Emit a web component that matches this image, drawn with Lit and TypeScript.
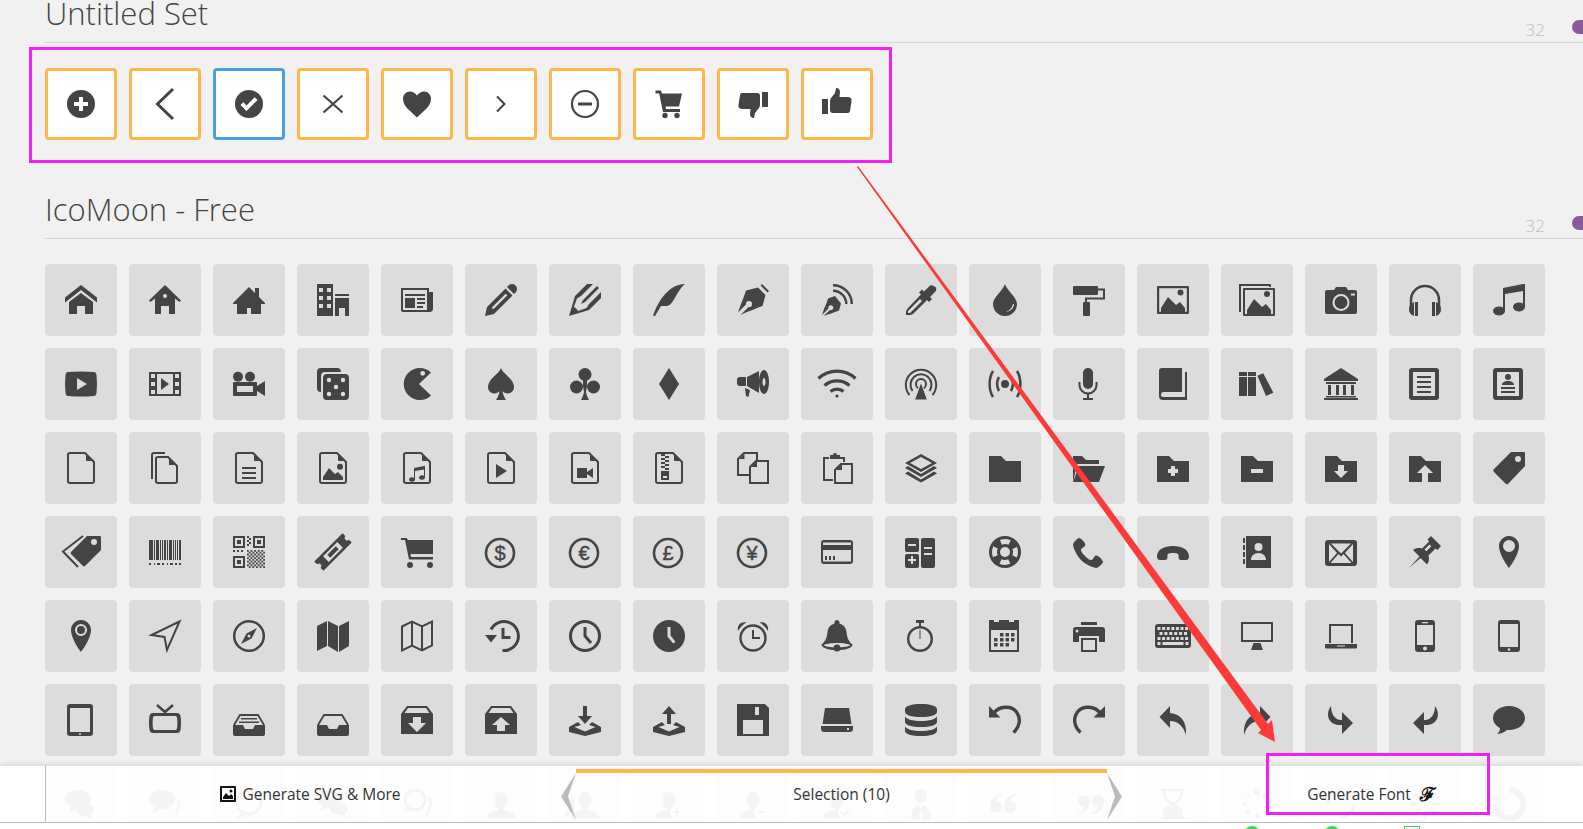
import { LitElement, html, css } from "lit";
import { customElement } from "lit/decorators.js";
import { unsafeSVG } from "lit/directives/unsafe-svg.js";

const INK = "#444";
const TILE = "#dcdcdc";
const P = (d: string) => `<path d="${d}"/>`;
const S = (d: string, w = 2, c = INK) => `<path d="${d}" fill="none" stroke="${c}" stroke-width="${w}"/>`;
const O = (x: number, y: number, r: number) => `<circle cx="${x}" cy="${y}" r="${r}"/>`;
const R = (x: number, y: number, r: number, w = 2) => `<circle cx="${x}" cy="${y}" r="${r}" fill="none" stroke="${INK}" stroke-width="${w}"/>`;
const c = (x: number, y: number, r: number) => `M${x - r} ${y}a${r} ${r} 0 1 0 ${2 * r} 0a${r} ${r} 0 1 0 ${-2 * r} 0z`;
const rr = (x: number, y: number, w: number, h: number, r: number) =>
  `M${x + r} ${y}h${w - 2 * r}a${r} ${r} 0 0 1 ${r} ${r}v${h - 2 * r}a${r} ${r} 0 0 1 ${-r} ${r}h${-(w - 2 * r)}a${r} ${r} 0 0 1 ${-r} ${-r}v${-(h - 2 * r)}a${r} ${r} 0 0 1 ${r} ${-r}z`;
const rect = (x: number, y: number, w: number, h: number) => `M${x} ${y}h${w}v${h}h${-w}z`;
const M = (f: string) => `<g transform="translate(32 0) scale(-1 1)">${f}</g>`;
const G = (t: string, f: string) => `<g transform="${t}">${f}</g>`;
const coin = (s: string) =>
  R(15, 17, 14, 2.6) + `<text x="15" y="24" font-size="20" text-anchor="middle" stroke="${INK}" stroke-width=".4" font-family="Liberation Sans, sans-serif">${s}</text>`;

const fileBase = S("M5 1h15l9 9v19a2 2 0 0 1-2 2H5a2 2 0 0 1-2-2V3a2 2 0 0 1 2-2z", 2) + P("M21 2.500l6.500 6.500h-6.500z");
const musicPath = "M30 0h2v23a6 4.500 0 1 1-2-3.400V7L12 10v17a6 4.500 0 1 1-2-3.400V4z";
const folderD = "M0 4h12l5 5h15v21H0z";
const frame30 = rr(0, 0, 30, 32, 3) + rect(4, 4, 22, 24);
const mountains = "M4 28v-4l7-11 8 8 4-3 5 6v4z";

const range = (n: number) => Array.from({ length: n }, (_, i) => i);
const qrChecker = range(10).flatMap((i) => range(10).filter((j) => (i + j) % 2 === 0).map((j) => rect(14 + i * 1.8, 14 + j * 1.8, 1.8, 1.8))).join("");
const barSpec = [[0, 4], [5, 1], [7, 3], [11, 1], [13, 1], [15, 2], [18, 1], [20, 3], [24, 1], [26, 1], [28, 1], [30, 2]];
const barcodeD = barSpec.map(([x, w]) => rect(x, 4, w, 20)).join("") + [[0, 2], [5, 1], [8, 3], [13, 2], [18, 1], [21, 3], [26, 2], [30, 2]].map(([x, w]) => rect(x, 27, w, 2)).join("");
const keysD =
  range(7).map((i) => rect(0.5 + i * 4.6, 7, 3, 3)).join("") +
  range(6).map((i) => rect(2.5 + i * 4.9, 12, 3, 3)).join("") +
  range(7).map((i) => rect(0.5 + i * 4.6, 17, 3, 3)).join("") +
  rect(0.5, 22, 3, 3) + rect(5.5, 22, 21, 3) + rect(28.5, 22, 3, 3);
const calD = [[11, 13], [16.5, 13], [22, 13], [5, 18], [11, 18], [16.5, 18], [22, 18], [5, 23], [11, 23], [16.5, 23]].map(([x, y]) => rect(x, y, 3.5, 3.5)).join("");
const undoArc = S("M5 9C10 2 22 1 27.500 8c5 7 3 15-3 20.500", 3.4) + P("M0 2v11.500h11.500z");
const undo2 = P("M13 2L2.500 13 13 24v-7c7 0 13 4 16 14 1-13-5-21-16-22z");
const forward = P("M6 2C0 10 3 22 17 21v9l11-11L17 8v8C10 16.500 6 10 6 2z");
const bubbleD = "M16 2c8.800 0 16 5 16 12s-7 12-16 12h-2c-3 2.500-7 4-10 4 2-1.500 3-3.500 3-6C3 22 0 18 0 14 0 7 7 2 16 2z";
const userD = "M18 22.100v-1.650c2.200-1.240 4-4.340 4-7.450 0-4.970 0-9-6-9s-6 4.030-6 9c0 3.100 1.800 6.200 4 7.450v1.650C7.200 22.660 2 26 2 30h28c0-4-5.200-7.340-12-7.900z";
const quote = "M7 13c3.500 0 6 2.700 6 6s-2.700 6-6 6-6-2.700-6-6.500C1 12 6 6 13 6v2c-3 0-5 1.500-6 5z";
const trayD = "M0 23l9-5 3 3-6.500 2 10.500 4.500 10.500-4.500-6.500-2 3-3 9 5v5L16 32 0 28z";

const topIcons = [
  P(c(16, 16, 14) + "M14 9h4v5h5v4h-5v5h-4v-5H9v-4h5z"),
  S("M24 1L8.500 16 24 31", 3),
  P(c(16, 16, 14) + "M13.500 23l-6-6 2.800-2.800 3.200 3.200 8.200-8.200 2.800 2.800z"),
  S("M6.500 7.500l19 17M25.500 7.500l-19 17", 2.2),
  P("M23 3.500c-3 0-5.500 1.700-7 4-1.500-2.300-4-4-7-4C5 3.500 2 6.800 2 11c0 8 9 13 14 18.500 5-5.500 14-10.500 14-18.500 0-4.200-3-7.500-7-7.500z"),
  S("M12 8.500l7.500 7.500-7.500 7.500", 2),
  R(16, 16, 13, 2.2) + P("M9 14.500h14v3H9z"),
  P("M2.500 2.500H8l1 3h20l-3 13H12.500l.6 2.500H27v3H10L6.200 5.500H2.500z") + O(12, 27.5, 2.7) + O(24, 27.5, 2.7),
  P("M25 4h6v15h-6z") + P("M5 5h15c2 0 3 1 3 3v9c0 1-.5 2-1 3l-4 5-1 5c-2.500 0-4-1.500-4-4l.5-5H6c-3 0-5-1-4.500-4L3 7c.2-1.200 1-2 2-2z"),
  G("rotate(180 16 15)", P("M25 4h6v15h-6z") + P("M5 5h15c2 0 3 1 3 3v9c0 1-.5 2-1 3l-4 5-1 5c-2.500 0-4-1.500-4-4l.5-5H6c-3 0-5-1-4.500-4L3 7c.2-1.200 1-2 2-2z")),
];

const gridIcons = [
  // row 1
  P("M32 18.451l-16-12.420-16 12.420v-5.064l16-12.420 16 12.420zM28 18v12h-8v-8h-8v8h-8v-12l12-9z"),
  P("M16 1L0 16.500l1.500 1.500L6 14.500V30h6v-8h8v8h6V14.500l4.500 3.500 1.500-1.500z" + c(16, 12, 2)),
  P("M32 19l-6-6V4h-4v5l-6-6L0 19v1h4v10h10v-6h4v6h10V20h4z"),
  P("M0 32h16V0H0zM10 4h4v4h-4zM10 12h4v4h-4zM10 20h4v4h-4zM2 4h4v4H2zM2 12h4v4H2zM2 20h4v4H2z") + P("M18 10h14v2H18zM18 32h4v-8h6v8h4V14H18z"),
  P("M28 8V4H0v22c0 1.105.895 2 2 2h27c1.657 0 3-1.343 3-3V8h-4zM26 26H2V6h24zM4 10h20v2H4zM16 14h8v2h-8zM16 18h8v2h-8zM16 22h6v2h-6zM4 14h10v10H4z"),
  P("M27 0c2.761 0 5 2.239 5 5 0 1.126-.372 2.164-1 3l-2 2-7-7 2-2c.836-.628 1.874-1 3-1zM2 23l-2 9 9-2 18.500-18.500-7-7zM22.362 11.362l-14 14-1.724-1.724 14-14z"),
  P("M12 20l4-2 14-14-2-2-14 14-2 4zM9.041 27.097c-.989-2.085-2.052-3.149-4.137-4.137l3.097-8.525 4-2.435 12-12h-6l-12 12-6 20 20-6 12-12v-6l-12 12-2.435 4z"),
  P("M0 32c4-12 14.469-32 32-32-8.219 6.594-12 22-18 22H8l-6 10z"),
  P("M25 0l7 7-1.500 1.500-7-7z") + P("M21 3.500L9 6.500C7 13 3 22 1 28.500L9 20.500a3 3 0 1 1 2.500 2.500L3.500 31C10 28 20 24 25.500 22l3-11z"),
  S("M12 1.200A18.800 18.800 0 0 1 30.800 20", 2.4) + S("M12 6.700A13.300 13.300 0 0 1 25.300 20", 2.4) + P("M14 12L7 14.500C6 19 3 24 1 31l6.500-6.500a2.500 2.500 0 1 1 1.500 1.500L2.500 32C7 30.500 13 28.500 18 26.500l2-7z"),
  P("M29 2.500a3.500 3.500 0 0 0-5 0l-5 5-2-2-3 3 2 2L3 24c-1 1-2 3-2 4v3h4c1 0 3-1 4-2l13-13 2 2 3-3-2-2 5-5a3.500 3.500 0 0 0 0-5.500zM5 29H3v-2L15 15l2 2z"),
  P("M16 0C14 7 4 13 4 20a12 12 0 0 0 24 0C28 13 18 7 16 0zM25 20c0 4-3.500 7.500-8 8 3.500-1.500 6-4 7-8z"),
  P(rr(0, 2, 25, 9, 1)) + S("M25 5.500h6v9H13v4", 2) + P(rr(10, 18, 7, 14, 1)),
  P(rr(0, 2, 32, 28, 1) + rect(2.2, 4.2, 27.6, 23.6)) + P(mountains) + O(23.5, 8.5, 3),
  S("M-1 28V1h30v2", 2) + P(rr(2, 4, 32, 28, 1) + rect(4, 6, 28, 24)) + G("translate(2 2)", P(mountains)) + O(26, 10, 3),
  P("M0 8a2 2 0 0 1 2-2h7l2-3h10l2 3h7a2 2 0 0 1 2 2v20a2 2 0 0 1-2 2H2a2 2 0 0 1-2-2z" + c(16, 18.5, 8.5) + c(16, 18.5, 6.5) + rect(26, 9.5, 4, 2)),
  S("M2 24V16a14 14 0 0 1 28 0v8", 2.5) + P("M6 18h3v14H6zM23 18h3v14h-3z") + P("M3.500 19l1.500-1v14C2 31 0 28.500 0 25.500S1.500 20 3.500 19z") + M(P("M3.500 19l1.500-1v14C2 31 0 28.500 0 25.500S1.500 20 3.500 19z")),
  P(musicPath),
  // row 2
  P("M3 4Q16 3 29 4q2 0 2.500 3 1 9 0 18-.5 3-2.500 3-13 1-26 0-2 0-2.500-3-1-9 0-18Q1 4 3 4zM12 10v12l10-6z"),
  P("M0 4h32v24H0zM2 6h4v4H2zM2 14h4v4H2zM2 22h4v4H2zM26 6h4v4h-4zM26 14h4v4h-4zM26 22h4v4h-4zM8 6h16v20H8z") + P("M12 10l8 6-8 6z"),
  O(5, 8.7, 5) + O(17, 8.7, 5) + P("M1 14h22a1 1 0 0 1 1 1v12a1 1 0 0 1-1 1H1a1 1 0 0 1-1-1V15a1 1 0 0 1 1-1zM4 18v6h16v-6z") + P("M24 18l8-5v15l-8-5z"),
  P("M4 0h16a4 4 0 0 1 4 4H8a4 4 0 0 0-4 4v16a4 4 0 0 1-4-4V4a4 4 0 0 1 4-4z") + P(rr(6, 6, 26, 26, 4) + c(12, 12, 2.2) + c(26, 12, 2.2) + c(19, 19, 2.2) + c(12, 26, 2.2) + c(26, 26, 2.2)),
  P("M30 4.600A16 16 0 1 0 30 27.400L18 16z" + c(21.7, 5.3, 2.4)),
  P("M16 0C14 6 3 11 3 19c0 4 3 6.500 6.500 6.500 2 0 4-1 5-2.500-.3 3-1.500 6-3.500 9h10c-2-3-3.200-6-3.500-9 1 1.500 3 2.500 5 2.500 3.500 0 6.500-2.500 6.500-6.500C29 11 18 6 16 0z"),
  O(16, 6.5, 6.5) + O(7.5, 19, 6.5) + O(24.5, 19, 6.5) + P("M14 10h4v8l-1 6c.5 3 1.500 5 3 8h-8c1.500-3 2.500-5 3-8l-1-6z"),
  P("M16 0L26 16 16 32 6 16z"),
  P("M3 9h6v9H3a3 3 0 0 1-3-3v-3a3 3 0 0 1 3-3z") + P("M10 9L22 3v22L10 18z") + P("M8 20l5 2-1.500 7-2.500-1z") + P("M27 2c2.800 0 5 5.400 5 12s-2.200 12-5 12-5-5.400-5-12 2.200-12 5-12zM27 10c-.8 0-1.500 1.800-1.500 4s.7 4 1.500 4 1.500-1.800 1.500-4-.7-4-1.500-4z"),
  S("M-2.500 10.500A27 27 0 0 1 34.500 10.500", 3.2) + S("M3.500 17.500A19 19 0 0 1 28.500 17.500", 3.2) + S("M9.500 23.500A10 10 0 0 1 22.500 23.500", 3.2) + O(16, 28, 1.6),
  S("M4.500 27A15.200 15.200 0 1 1 27.500 27", 2) + S("M7.500 23A10.500 10.500 0 1 1 24.500 23", 2) + R(16, 16, 5, 2) + `<path d="M16 14L22.500 32h-13z" stroke="${TILE}" stroke-width="1"/>`,
  S("M4 3C-.5 10-.5 22 4 29", 2.5) + S("M10 9C7.500 13 7.500 19 10 23", 2.5) + M(S("M4 3C-.5 10-.5 22 4 29", 2.5) + S("M10 9C7.500 13 7.500 19 10 23", 2.5)) + O(16, 16, 4),
  P(rr(10, 0, 10, 21, 5)) + S("M6.500 14v3a8.500 8.500 0 0 0 17 0v-3", 2) + P("M14 25h2v5h-2zM10 30h10v2H10z"),
  P("M5 0h20v24H6.500a2.500 2.500 0 0 0 0 5H28V4h2v28H6a4 4 0 0 1-4-4V3a3 3 0 0 1 3-3z"),
  P("M-2 4h8v24h-8zM-2 8h8v1h-8z") + P("M7 4h8v24H7zM7 8h8v1H7z") + P("M16.400 7.700l5.800-2.400L32.400 24.700 25 28z"),
  P("M16 0L33 11v2H-1v-2z") + P("M1 14h30v2H1zM3 17h3v10H3zM11 17h3v10h-3zM18 17h3v10h-3zM26 17h3v10h-3zM1 28h30v1.500H1zM-1 30h34v2H-1z"),
  P(frame30 + "M8 8h14v2H8zM8 13h14v2H8zM8 18h14v2H8zM8 23h14v2H8z"),
  P(frame30 + c(15, 9, 3) + "M9 17c0-3 3-4 6-4s6 1 6 4zM8 19h14v2H8zM8 23h14v2H8z"),
  // row 3
  fileBase,
  S("M3 27V3a2 2 0 0 1 2-2h11", 2) + S("M9 5h10l9 9v15a2 2 0 0 1-2 2H9a2 2 0 0 1-2-2V7a2 2 0 0 1 2-2z", 2) + P("M20 6.500l6.500 6.500H20z"),
  fileBase + P("M9 15h14v2H9zM9 20h14v2H9zM9 25h14v2H9z"),
  fileBase + P("M6 28v-3l6-9 6 6 3-2 5 5v3z") + O(23, 14.7, 3),
  fileBase + G("translate(8 14) scale(.5)", P(musicPath)),
  fileBase + P("M11 12l11 7-11 7z"),
  fileBase + P("M8 16h10v10H8zM18 20l6-4v10l-6-4z"),
  fileBase + P(rect(8, 2, 4, 2) + rect(12, 4, 4, 2) + rect(8, 6, 4, 2) + rect(12, 8, 4, 2) + rect(8, 10, 4, 2) + rect(12, 12, 4, 2) + rect(8, 14, 4, 2) + rect(12, 16, 4, 2) + rect(8, 19, 8, 9) + rect(10, 24, 4, 2)),
  S("M12 23H1V7l6-6h13v7", 2) + P("M2.500 7h5V2z") + S("M19 9h12v22H13V15z", 2) + P("M14 15h6V9z"),
  S("M8 6H3v22h9", 2) + S("M18 6h5v4", 2) + P("M9 3h3a2 2 0 0 1 4 0h3v4H9z") + S("M20 12h11v19H14V18z", 2) + P("M15 18h6v-6z"),
  P("M16 2L32 11 16 20 0 11zM16 5L5 11l11 6 11-6z") + P("M0 16l3-2 13 8 13-8 3 2-16 9z") + P("M0 21.500l3-2 13 8 13-8 3 2-16 9z"),
  P(folderD),
  P("M26 30l6-16H6L0 30z") + P("M4 12L0 30V4h9l4 4h13v4z"),
  P(folderD + "M14 14h4v3h3v4h-3v3h-4v-3h-3v-4h3z"),
  P(folderD + "M10 17h12v4H10z"),
  P(folderD + "M13 13h6v6h4l-7 7-7-7h4z"),
  P(folderD + "M16 13l8 8h-5v9h-6v-9H8z"),
  P("M31 0H18L1 17a2 2 0 0 0 0 3l11.500 11.500a2 2 0 0 0 3 0L32 14V1a1 1 0 0 0-1-1z" + c(25, 7, 3)),
  // row 4
  P("M35 0H22L6 16a1.500 1.500 0 0 0 0 2l12 12a1.500 1.500 0 0 0 2 0L36 14V1a1 1 0 0 0-1-1z" + c(29, 6, 3)) + S("M18 0L-2 15.500 13 31", 2),
  P(barcodeD),
  P(rect(0, 0, 12, 12) + rect(2, 2, 8, 8) + rect(4, 4, 4, 4) + rect(20, 0, 12, 12) + rect(22, 2, 8, 8) + rect(24, 4, 4, 4) + rect(0, 20, 12, 12) + rect(2, 22, 8, 8) + rect(4, 24, 4, 4)) + P(qrChecker + rect(14, 0, 2, 2) + rect(16, 2, 2, 2) + rect(14, 4, 2, 2) + rect(16, 6, 2, 2) + rect(14, 8, 2, 2) + rect(0, 14, 2, 2) + rect(4, 14, 2, 2) + rect(8, 14, 2, 2)),
  G("rotate(-45 16 16)", P("M-4 9.500H36v4a2.500 2.500 0 0 0 0 5v4H-4v-4a2.500 2.500 0 0 0 0-5zM6 12h20v8H6zM10 14h12v4H10z")),
  P("M0 2h5.500L7 4h25v14H9.500l.5 3h22v2.500H8L4 4H0z") + O(9, 29, 3) + O(29, 29, 3),
  coin("$"),
  coin("€"),
  coin("£"),
  coin("¥"),
  P(rr(0, 4, 32, 24, 3) + rect(2, 6.5, 28, 2.5) + rect(2, 14, 28, 11.5) + "M4 20h2v4H4zM8 20h2v4H8zM12 20h2v4h-2z"),
  P(rr(0, 2, 14, 14, 2) + rect(3, 8, 8, 2)) + P(rr(0, 18, 14, 14, 2) + "M6 20h2v3h3v2H8v3H6v-3H3v-2h3z") + P(rr(16, 2, 14, 30, 2) + rect(19, 11, 8, 2) + rect(19, 17, 8, 2)),
  O(16, 16, 16) + `<circle cx="16" cy="16" r="10.500" fill="none" stroke="${TILE}" stroke-width="5" stroke-dasharray="9 7.490" stroke-dashoffset="4.500"/>` + `<circle cx="16" cy="16" r="5" fill="${TILE}"/>`,
  P("M22 20c-2 2-2 4-4 4s-4-2-6-4-4-4-4-6 2-2 4-4-4-8-6-8-6 6-6 6c0 4 4.109 12.109 8 16s12 8 16 8c0 0 6-4 6-6s-6-8-8-6z"),
  P("M0 20.500c0-7 7-10.500 16-10.500s16 3.500 16 10.500c0 2-1 3.500-3 3.500h-5c-2 0-2.500-1.500-2.500-3 0-1 .5-2-.5-3-1-.7-2.500-1-5-1s-4 .3-5 1c-1 1-.5 2-.5 3 0 1.500-.5 3-2.500 3H3c-2 0-3-1.500-3-3.500z"),
  P("M5 0h25v32H5z" + c(17.5, 11, 4) + "M10 24c0-4 3-7 7.500-7s7.500 3 7.500 7z") + P("M2 2h2v5H2zM2 9h2v5H2zM2 16h2v5H2zM2 23h2v5H2z"),
  P(rr(0, 4, 32, 26, 3) + "M4 8v18l8-9zM6 7.500l10 10 10-10zM28 8l-8 9 8 9zM5.500 27h21l-8-9-2.500 2.500-2.500-2.500z"),
  P("M22 0l-3.500 3.500 1.500 2-7 7c-3-1-6.500-.5-9 1.500l6.500 6.500L0 32l11.500-10 6.500 6.500c2-2.500 2.500-6 1.500-9l7-7 2 1.500L32 10zM15.500 13.500l5-5 1.800 1.800-5 5z"),
  P("M16 0C10.500 0 6 4.500 6 10c0 9 10 22 10 22s10-13 10-22C26 4.500 21.500 0 16 0z" + c(16, 10, 6)),
  // row 5
  P("M16 0C10.500 0 6 4.500 6 10c0 9 10 22 10 22s10-13 10-22C26 4.500 21.500 0 16 0z" + c(16, 10, 6) + c(16, 10, 4)),
  S("M30.500 1.500L2.500 15l13 2 2.500 13z", 2),
  R(16, 16, 14.8, 2.5) + P("M24 8L13.500 13.500 8 24l10.500-5.500z" + c(16, 16, 1.5)),
  P("M0 6l10-5v25L0 31zM11 1l10 5v26l-10-6zM22 6l10-5v25l-10 6z"),
  S("M1 6.500l10-5 10 5 10-5v24l-10 5-10-5-10 5zM11 1.500v24M21 6.500v24", 2),
  S("M6 9.500A14.500 14.500 0 1 1 17.500 30.500", 3) + P("M0 15h12l-6 7.500z") + P("M16.500 8h3v8h6v3h-9z"),
  R(16, 16, 14.5, 3) + S("M16 7v9l6 7", 3),
  P(c(16, 16, 16) + "M14.500 7h3v8.400l5 6.300-2.300 1.900-5.700-7.100z"),
  R(16, 18, 12.5, 2.4) + S("M16 10v8h7", 2) + P("M1 11C0 5 4 1.500 9.500 2.500 6 4.500 3.500 7 1 11z") + P("M31 11c1-6-3-9.500-8.500-8.500 3.500 2 6 4.500 8.500 8.500z"),
  P("M16 0c-1.500 0-2.500 1-2.500 2.500v1C9 5 7 8 6.500 12c-.5 5-1.500 9-6 12.500C.5 28 7 30 16 30s15.500-2 15.500-5.500c-4.500-3.500-5.500-7.500-6-12.500C25 8 23 5 18.500 3.500v-1C18.500 1 17.500 0 16 0zM2.500 25c1.500 1.500 7 2.500 13.500 2.500s12-1 13.500-2.500c-2-1-7-2-13.500-2s-11.500 1-13.500 2z") + O(16, 28, 3.5),
  R(15, 19, 11.8, 2.4) + P("M11 0h8v3h-3v4h-2V3h-3z") + S("M15 10v9", 1),
  P("M0 0h5v2h5V0h10v2h5V0h5v32H0zM2 10v20h26V10z") + P(calD),
  P("M8 2h16v3H8z") + P("M3 7h26a3 3 0 0 1 3 3v12h-6v-6H6v6H0V10a3 3 0 0 1 3-3z" + c(4, 11, 1.5)) + P("M8 18h16v14H8zM10 20v10h12V20z"),
  P(rr(-2, 4, 36, 24, 3) + keysD),
  P("M0 2h32v20H0zM2 4v16h28V4z") + P("M10 30l2.500-7h7l2.500 7z"),
  S("M5 23V5h22v18", 2) + P("M0 24h32v3.500a1 1 0 0 1-1 1H1a1 1 0 0 1-1-1zM12 25.500h8v1h-8z"),
  P(rr(6, 0, 20, 32, 3) + rect(8, 5, 16, 20) + rect(13, 2, 6, 1.2) + c(16, 28.5, 2)),
  P(rr(5, 0, 22, 32, 3) + rect(7, 4, 18, 23) + c(16, 29.5, 1.3)),
  // row 6
  P(rr(2, 0, 26, 32, 3) + rect(5, 4, 20, 24) + c(15, 30, 1)),
  S("M8 1l8 7 8-7", 2.5) + P("M4 9h24c2 0 3 1 3.500 3 .7 4 .7 9 0 14-.5 2-1.500 3-3.500 3H4c-2 0-3-1-3.500-3-.7-5-.7-10 0-14C1 10 2 9 4 9zM6 12c-1 0-1.500.5-2 1.500-.5 3-.5 8 0 11 .5 1 1 1.500 2 1.500h20c1 0 1.500-.5 2-1.500.5-3 .5-8 0-11-.5-1-1-1.500-2-1.500z"),
  P("M0 21h10l2 4h8l2-4h10v9a2 2 0 0 1-2 2H2a2 2 0 0 1-2-2z") + S("M1 21l6-10h18l6 10", 1.8) + P("M8 14h16v1.500H8zM6 17.500h20V19H6z"),
  P("M0 21h10l2 4h8l2-4h10v9a2 2 0 0 1-2 2H2a2 2 0 0 1-2-2z") + S("M1 21l6-10h18l6 10", 1.8),
  P("M6 2h20l6 8v20H0V10zM7 4L3.500 9h25L25 4zM12 13h8v6h5l-9 9-9-9h5z"),
  P("M6 2h20l6 8v20H0V10zM7 4L3.500 9h25L25 4zM16 13l9 8h-5v6h-8v-6H7z"),
  P("M14 2h4v10h5l-7 8-7-8h5z") + P(trayD),
  P("M16 2l7 8h-5v10h-4V10H9z") + P(trayD),
  P("M0 0h28l4 4v28H0zM18 3h4v8h-4zM6 16v14h20V16z"),
  P("M4 4h24l2.500 16H1.500z") + P("M0 22h32v2.500a3.500 3.500 0 0 1-3.500 3.500h-25A3.500 3.500 0 0 1 0 24.500zM26 24h2v2h-2z"),
  P("M16 0C7 0 0 2 0 5v3c0 3 7 5 16 5s16-2 16-5V5c0-3-7-5-16-5z") + P("M0 12.500c2 3 8 4.500 16 4.500s14-1.500 16-4.500V18c0 3-7 5-16 5S0 21 0 18z") + P("M0 22.500c2 3 8 4.500 16 4.500s14-1.500 16-4.500V27c0 3-7 5-16 5S0 30 0 27z"),
  undoArc,
  M(undoArc),
  undo2,
  M(undo2),
  forward,
  M(forward),
  P(bubbleD),
  // row 7 (behind the footer)
  P("M13 2c7 0 13 4 13 9.500S20 21 13 21h-2c-2 2-5 3-8 3 1.500-1 2.500-3 2.500-5C2 17.500 0 14.500 0 11.500 0 6 6 2 13 2z") + P("M20 15c5 0 9 3 9 6.500 0 2-1 4-3 5 0 2 1 3 2 4-2.500 0-5-1-6.500-2.500H20c-5 0-9-3-9-6.500s4-6.500 9-6.500z"),
  P("M13 2c7 0 13 4 13 9.500S20 21 13 21h-2c-2 2-5 3-8 3 1.500-1 2.500-3 2.500-5C2 17.500 0 14.500 0 11.500 0 6 6 2 13 2z") + S("M28 12c2.500 2 3 6 1 9-1 2-2 3-2 6", 2),
  R(16, 14, 12, 3) + P("M8 24c-1 3-3 5-6 6 4 0 8-1 10-3z"),
  P("M12 2c6.500 0 12 3.500 12 8.500S18.500 19 12 19h-2c-2 2-4 3-7 3 1.500-1 2-3 2-5C2 15.500 0 13 0 10.500 0 5.500 5.500 2 12 2z") + P("M22 14c5 0 9 3 9 6.500 0 2-1 4-3 5 0 2 1 3 2 4-2.500 0-5-1-6.500-2.500H22c-5 0-9-3-9-6.500s4-6.500 9-6.500z"),
  R(14, 12, 10, 3) + S("M27 9c3 3 4 8 1 12-1 2-2 4-2 7", 2.4) + P("M6 19c-1 3-3 4-5 5 3 0 7-1 9-3z"),
  P(userD),
  P(userD) + G("translate(-5 0)", P("M9 8c-2 2-3 5-3 8 0 2 1 4 2 5-3 1-7 3-8 7h4c1-2 4-4 7-5z")),
  P(userD) + `<circle cx="24" cy="24" r="7" fill="${TILE}"/>` + P("M23 20h2v3h3v2h-3v3h-2v-3h-3v-2h3z"),
  P(userD) + `<circle cx="24" cy="24" r="7" fill="${TILE}"/>` + P("M20 23h8v2h-8z"),
  P(userD) + `<circle cx="24" cy="24" r="7" fill="${TILE}"/>` + S("M20 24l3 3 5-6", 2),
  P("M16 1c-4 0-6 3-6 7s2.500 7 6 7 6-3 6-7-2-7-6-7zM6 31c0-8 3-13 8-14l2 4 2-4c5 1 8 6 8 14H18l-1-7h-2l-1 7z"),
  P(quote) + G("translate(14 0)", P(quote)),
  G("rotate(180 16 16)", P(quote) + G("translate(14 0)", P(quote))),
  P("M4 1h24v2h-2v4c0 4-4 7-7 9 3 2 7 5 7 9v4h2v2H4v-2h2v-4c0-4 4-7 7-9-3-2-7-5-7-9V3H4zM9 3v4c0 3 3 5 7 7.500 4-2.500 7-4.500 7-7.500V3z") + P("M10 26c1-3 4-5 6-6 2 1 5 3 6 6v2H10z"),
  [[16, 4, 3.5], [25, 8, 3.2], [28, 16, 2.9], [25, 24, 2.6], [16, 28, 2.3], [7, 24, 2], [4, 16, 1.7], [7, 8, 1.4]].map(([x, y, r]) => O(x, y, r)).join(""),
  S("M3 16A13 13 0 0 1 16 3", 3) + S("M29 16A13 13 0 0 1 16 29", 3),
  range(8).map((i) => G(`rotate(${i * 45} 16 16)`, P("M14.500 1h3v8h-3z"))).join(""),
  S("M16 2A14 14 0 1 1 2 16", 6) + P("M0 10l6-1-2 6z"),
];

@customElement("app-root")
export class AppRoot extends LitElement {
  static styles = css`
    :host {
      display: block;
      position: relative;
      width: 100%;
      height: 829px;
      overflow: hidden;
      background: #f1f1f1;
      color: #444;
      font-family: "Open Sans", "Liberation Sans", sans-serif;
    }
    .page {
      padding-left: 45px;
    }
    .head {
      height: 42px;
      border-bottom: 1px solid #d6d6d6;
      display: flex;
      align-items: flex-start;
      justify-content: space-between;
    }
    h1 {
      margin: 0;
      font-weight: 300;
      font-size: 31px;
      line-height: 26px;
      color: #444;
    }
    .meta {
      display: flex;
      align-items: center;
      height: 20px;
      margin-top: 19px;
      gap: 27px;
      margin-right: -11px;
      color: #bdbdbd;
      font-size: 17px;
      font-weight: 300;
    }
    .knob {
      width: 22px;
      height: 14px;
      border-radius: 7px;
      background: #8a5a9c;
      margin-bottom: 4px;
    }
    .grid {
      display: grid;
      grid-template-columns: repeat(18, 72px);
      gap: 12px;
      margin-top: 25px;
    }
    .picked {
      margin-bottom: 56px;
    }
    .tile {
      width: 72px;
      height: 72px;
      box-sizing: border-box;
      background: #dcdcdc;
      border-radius: 4px;
      display: flex;
      align-items: center;
      justify-content: center;
    }
    .tile.sel {
      background: #fff;
      border: 3px solid #ffb64c;
    }
    .tile.on {
      border-color: #4a9fdf;
    }
    svg.ic {
      width: 32px;
      height: 32px;
      overflow: visible;
      fill: #444;
      fill-rule: evenodd;
      flex: none;
    }
    svg.ic text {
      fill: #444;
    }
    .foot {
      position: absolute;
      left: 0;
      right: 0;
      bottom: 0;
      height: 63px;
      display: flex;
      flex-direction: column;
      box-shadow: 0 -2px 5px rgba(0, 0, 0, 0.1);
    }
    .bar {
      height: 56px;
      flex: none;
      display: flex;
      padding-left: 45px;
      background: rgba(255, 255, 255, 0.94);
      border-bottom: 1px solid #bbb;
      font-size: 15.500px;
      color: #333;
    }
    .btn {
      display: flex;
      align-items: center;
      justify-content: center;
      gap: 6px;
      height: 100%;
      box-sizing: border-box;
    }
    .svgbtn {
      width: 516px;
      border-left: 1px solid #bbb;
      padding-left: 14px;
    }
    .selbtn {
      width: 561px;
      position: relative;
    }
    .selbtn::before {
      content: "";
      position: absolute;
      left: 15px;
      right: 15px;
      top: 3px;
      height: 4px;
      background: #ffb64c;
    }
    .chev {
      position: absolute;
      top: 7px;
      width: 15px;
      height: 47px;
      fill: #bbb;
    }
    .chev.l {
      left: 0;
    }
    .chev.r {
      right: 0;
    }
    .fontbtn {
      width: 461px;
      padding-left: 38px;
      gap: 9px;
    }
    .fglyph {
      font: normal bold 19px "DejaVu Serif", "Liberation Serif", serif;
      color: #111;
    }
    .pic {
      width: 16px;
      height: 16px;
      flex: none;
    }
    .status {
      flex: 1;
      background: #fff;
      display: flex;
      align-items: flex-start;
      padding-top: 3px;
      overflow: hidden;
    }
    .status i {
      display: block;
      flex: none;
    }
    .dot {
      width: 16px;
      height: 16px;
      border-radius: 50%;
      background: #33dd55;
    }
    .sq {
      width: 14px;
      height: 14px;
      border: 1px solid #33dd55;
    }
    .sl {
      height: 1px;
      margin-top: 3px;
      background: #c4c4c4;
    }
    .mark {
      width: 3px;
      height: 1px;
      margin-top: 3px;
      background: #4a9fdf;
    }
    .pink {
      position: absolute;
      box-sizing: border-box;
      border: 3px solid #f31ff3;
    }
    .pink.a {
      left: 29px;
      top: 47px;
      width: 863px;
      height: 116px;
    }
    .pink.b {
      left: 1266px;
      top: 753px;
      width: 224px;
      height: 62px;
    }
    .arrow {
      position: absolute;
      left: 0;
      top: 0;
      width: 1583px;
      height: 829px;
      pointer-events: none;
      fill: #fc3a3a;
    }
  `;

  private icon(f: string) {
    return html`<svg class="ic" viewBox="0 0 32 32">${unsafeSVG(f)}</svg>`;
  }

  private head(t: string) {
    return html`<div class="head">
      <h1>${t}</h1>
      <div class="meta"><span>32</span><div class="knob"></div></div>
    </div>`;
  }

  render() {
    return html`
      <div class="page">
        ${this.head("Untitled Set")}
        <div class="grid picked">
          ${topIcons.map((f, i) => html`<div class="tile sel ${i === 2 ? "on" : ""}">${this.icon(f)}</div>`)}
        </div>
        ${this.head("IcoMoon - Free")}
        <div class="grid">
          ${gridIcons.map((f) => html`<div class="tile">${this.icon(f)}</div>`)}
        </div>
      </div>

      <svg class="arrow" viewBox="0 0 1583 829">
        <polygon points="858,166 1268,724 1272,720 1275,742 1258,733 1261,730 857,167"></polygon>
      </svg>

      <div class="foot">
        <div class="bar">
          <div class="btn svgbtn">
            <svg class="pic" viewBox="0 0 16 16">
              <path fill="#111" fill-rule="evenodd" d="M1 0h14a1 1 0 0 1 1 1v14a1 1 0 0 1-1 1H1a1 1 0 0 1-1-1V1a1 1 0 0 1 1-1zM2 2v12h12V2z"></path>
              <path fill="#111" d="M3 13v-2l3-4 3 3 2-2 2 2v3zM11 3.500a1.500 1.500 0 1 1 0 3 1.500 1.500 0 0 1 0-3z"></path>
            </svg>
            <span>Generate SVG &amp; More</span>
          </div>
          <div class="btn selbtn">
            <svg class="chev l" viewBox="0 0 15 47"><polygon points="15,0 0,23.500 15,47 7,23.500"></polygon></svg>
            <span>Selection (10)</span>
            <svg class="chev r" viewBox="0 0 15 47"><polygon points="0,0 15,23.500 0,47 8,23.500"></polygon></svg>
          </div>
          <div class="btn fontbtn">
            <span>Generate Font</span>
            <span class="fglyph">ℱ</span>
          </div>
        </div>
        <div class="status">
          <i class="mark" style="margin-left:188px"></i>
          <i class="dot" style="margin-left:1053px"></i>
          <i class="sl" style="margin-left:5px;width:35px"></i>
          <i class="dot" style="margin-left:24px"></i>
          <i class="sl" style="margin-left:6px;width:43px"></i>
          <i class="sq" style="margin-left:15px"></i>
          <i class="sl" style="margin-left:6px;width:40px"></i>
          <i class="sl" style="margin-left:25px;width:15px"></i>
          <i class="sl" style="margin-left:27px;width:13px"></i>
          <i class="sl" style="margin-left:35px;width:18px"></i>
        </div>
      </div>

      <div class="pink a"></div>
      <div class="pink b"></div>
    `;
  }
}
